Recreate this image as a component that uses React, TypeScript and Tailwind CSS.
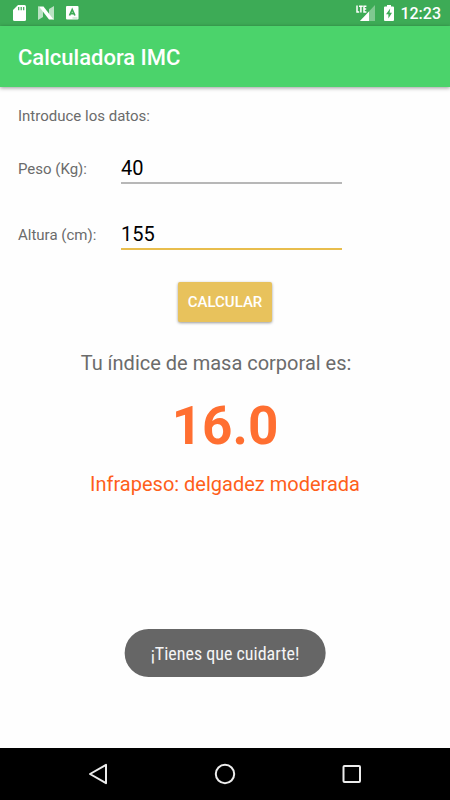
import { useState } from "react";

const FONT = "font-[Roboto,'Liberation_Sans',sans-serif]";

interface Result {
  imc: string;
  label: string;
}

function classify(imc: number) {
  if (imc < 16) return "Infrapeso: delgadez severa";
  if (imc < 17) return "Infrapeso: delgadez moderada";
  if (imc < 18.5) return "Infrapeso: delgadez aceptable";
  if (imc < 25) return "Peso normal";
  if (imc < 30) return "Sobrepeso";
  return "Obesidad";
}

function StatusBar() {
  return (
    <div className="flex h-[26px] shrink-0 items-center bg-[#3dab56] pl-[13px] pr-[9px] text-white">
      <svg width="13" height="16" viewBox="0 0 13 16" aria-hidden="true">
        <path fill="currentColor" d="M5 0h6.500a1.500 1.500 0 0 1 1.500 1.500v13a1.500 1.500 0 0 1-1.500 1.500h-10A1.500 1.500 0 0 1 0 14.500V5z" />
        <path stroke="#3dab56" strokeWidth="1.200" d="M5.700 2v3.300M8.200 2v3.300M10.700 2v3.300" />
      </svg>
      <svg className="ml-3" width="16" height="14" viewBox="0 0 16 14" aria-hidden="true">
        <path fill="currentColor" opacity=".65" d="M0 0l5 3v8l-5 3zM16 0v14l-5-3V3z" />
        <path fill="currentColor" d="M1 .500h4.500L15.500 13.500H11z" />
      </svg>
      <svg className="ml-3" width="13" height="14" viewBox="0 0 13 14" aria-hidden="true">
        <rect width="12.500" height="13.500" rx="1" fill="currentColor" />
        <path fill="none" stroke="#3dab56" strokeWidth="1.700" d="M3.500 9.500L6.200 3.500 8.900 9.500M4.400 7.700h3.600" />
        <path stroke="#3dab56" opacity=".4" d="M6.500 12h5" />
      </svg>
      <div className="ml-auto flex items-center">
        <svg width="20" height="16" viewBox="0 0 20 16" aria-hidden="true">
          <path fill="currentColor" opacity=".35" d="M19 0v16H4z" />
          <path fill="currentColor" d="M13 6.500V16H4z" />
          <path fill="none" stroke="#3dab56" strokeWidth="8" d="M0 4h11" />
          <path fill="none" stroke="currentColor" strokeWidth="1.500" d="M1 .500v6.400h2.200M3 1.200h3.800M4.900 1.200v6.400M10.400 1.200H8v5.700h2.400M8 4h2.200" />
        </svg>
        <svg className="ml-2" width="10" height="16" viewBox="0 0 10 16" aria-hidden="true">
          <path fill="currentColor" d="M3 0h4v1.500h2a1 1 0 0 1 1 1V15a1 1 0 0 1-1 1H1a1 1 0 0 1-1-1V2.500a1 1 0 0 1 1-1h2z" />
          <path fill="#3dab56" d="M6.200 3.500L2 9.200h2.400V13.500L8 7.800H5.600z" />
        </svg>
        <span className="ml-1.5 pt-0.5 text-base leading-5 font-medium">12:23</span>
      </div>
    </div>
  );
}

function NavBar() {
  const btn = "flex h-full w-16 items-center justify-center text-[#ececec]";
  return (
    <nav className="flex h-[52px] shrink-0 items-center justify-center gap-[63px] bg-black">
      <button type="button" aria-label="Atrás" className={btn}>
        <svg width="20" height="22" viewBox="0 0 20 22" fill="none" stroke="currentColor" strokeWidth="2" strokeLinejoin="round">
          <path d="M18 1.800v18.400L2 11z" />
        </svg>
      </button>
      <button type="button" aria-label="Inicio" className={btn}>
        <svg width="22" height="22" viewBox="0 0 22 22" fill="none" stroke="currentColor" strokeWidth="2">
          <circle cx="11" cy="11" r="9.200" />
        </svg>
      </button>
      <button type="button" aria-label="Recientes" className={btn}>
        <svg width="20" height="20" viewBox="0 0 20 20" fill="none" stroke="currentColor" strokeWidth="2">
          <rect x="1.500" y="2" width="16.500" height="16" rx="1" />
        </svg>
      </button>
    </nav>
  );
}

export default function App() {
  const [peso, setPeso] = useState("40");
  const [altura, setAltura] = useState("155");
  const [result, setResult] = useState<Result>({ imc: "16.0", label: "Infrapeso: delgadez moderada" });

  function calcular() {
    const m = Number(altura) / 100;
    if (!m || !Number(peso)) return;
    const imc = Number(peso) / (m * m);
    // one decimal, truncated
    setResult({ imc: (Math.floor(imc * 10) / 10).toFixed(1), label: classify(imc) });
  }

  const label = "w-[103px] shrink-0 pt-1.5 text-[15px] leading-6 text-[#6b6b6b]";
  const field = "h-9 w-[221px] min-w-0 bg-transparent pt-1.5 text-xl text-black outline-none";

  return (
    <div className={`relative flex min-h-screen flex-col bg-[#fefefe] ${FONT}`}>
      <StatusBar />
      <header className="flex h-[61px] shrink-0 items-center bg-[#4bd36b] px-[18px] pt-0.5 shadow-[0_1px_4px_rgba(0,0,0,0.4)]">
        <h1 className="text-[22px] leading-7 font-medium text-white">Calculadora IMC</h1>
      </header>

      <main className="flex flex-1 flex-col px-[18px] pt-[17px]">
        <p className="text-[15px] leading-6 text-[#6b6b6b]">Introduce los datos:</p>

        <div className="mt-5 flex h-9 items-center">
          <label htmlFor="peso" className={label}>Peso (Kg):</label>
          <input id="peso" inputMode="decimal" value={peso} onChange={(e) => setPeso(e.target.value)}
            className={`${field} border-b-2 border-[#b7b7b7]`} />
        </div>
        <div className="mt-[30px] flex h-9 items-center">
          <label htmlFor="altura" className={label}>Altura (cm):</label>
          <input id="altura" inputMode="decimal" value={altura} onChange={(e) => setAltura(e.target.value)}
            className={`${field} border-b-2 border-[#e8bd4c]`} />
        </div>

        <button type="button" onClick={calcular}
          className="mt-8 h-10 self-center rounded-xs bg-[#e8c25c] px-2.5 text-[15px] font-medium text-white shadow-[0_1px_3px_rgba(0,0,0,0.4)]">
          CALCULAR
        </button>

        <section className="flex flex-col items-center text-center">
          <p className="mt-[27px] mr-[18px] text-xl leading-7 text-[#6b6b6b]">Tu índice de masa corporal es:</p>
          <p className="mt-5 text-[53px] leading-[58px] font-bold text-[#ff6f31]">{result.imc}</p>
          <p className="mt-[15px] text-xl leading-7 text-[#ff5f1a]">{result.label}</p>
        </section>
      </main>

      <NavBar />

      {/* toast */}
      <div role="status" className="absolute bottom-[123px] left-1/2 flex h-12 -translate-x-1/2 items-center rounded-full bg-[#666666] px-[26px] pt-0.5 font-['Roboto_Condensed',Roboto,sans-serif] text-lg whitespace-nowrap text-[#f5f5f5]">
        ¡Tienes que cuidarte!
      </div>
    </div>
  );
}
